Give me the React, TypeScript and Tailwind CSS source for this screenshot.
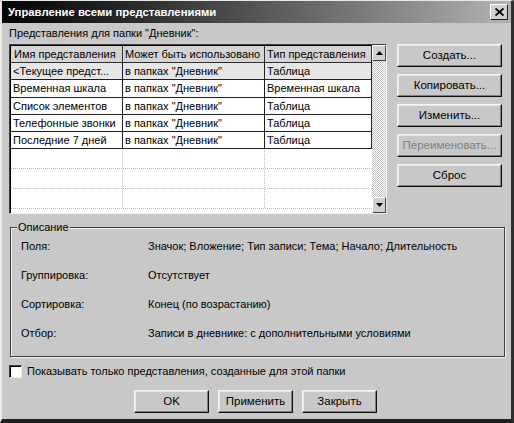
import React from "react";

const font = { fontFamily: '"Liberation Sans", Arial, sans-serif' };

function WinButton({ label, disabled, className = "" }: { label: string; disabled?: boolean; className?: string }) {
  return (
    <div
      className={`flex items-center justify-center border border-t-[#f4f4f4] border-l-[#f4f4f4] border-r-[#101010] border-b-[#101010] bg-[#c8c8c8] shadow-[inset_-1px_-1px_#808080,inset_1px_1px_#e8e8e8] text-[11.5px] ${
        disabled ? "text-[#808080]" : "text-black"
      } ${className}`}
    >
      {label}
    </div>
  );
}

const rows = [
  ["<Текущее предст...", 'в папках "Дневник"', "Таблица"],
  ["Временная шкала", 'в папках "Дневник"', "Временная шкала"],
  ["Список элементов", 'в папках "Дневник"', "Таблица"],
  ["Телефонные звонки", 'в папках "Дневник"', "Таблица"],
  ["Последние 7 дней", 'в папках "Дневник"', "Таблица"],
];

const desc = [
  ["Поля:", "Значок; Вложение; Тип записи; Тема; Начало; Длительность"],
  ["Группировка:", "Отсутствует"],
  ["Сортировка:", "Конец (по возрастанию)"],
  ["Отбор:", "Записи в дневнике: с дополнительными условиями"],
];

function Arrow({ up }: { up?: boolean }) {
  return (
    <svg width="7" height="4" viewBox="0 0 7 4">
      {up ? <polygon points="0,4 7,4 3.5,0" fill="#000" /> : <polygon points="0,0 7,0 3.5,4" fill="#000" />}
    </svg>
  );
}

export default function App() {
  return (
    <div
      style={font}
      className="w-[514px] h-[423px] bg-[#c8c8c8] flex flex-col border-l-[2px] border-l-[#e8e8e8] border-t-[1px] border-t-[#e8e8e8] border-r-[3px] border-r-[#303030] border-b-[4px] border-b-[#202020] overflow-hidden"
    >
      {/* Title bar */}
      <div className="h-[22px] flex items-center justify-between bg-gradient-to-r from-[#050505] via-[#555555] to-[#b4b4b4] pl-[6px] pr-[3px]">
        <span className="text-white font-bold text-[11.3px]">Управление всеми представлениями</span>
        <div className="w-[18px] h-[16px] bg-[#d0d0d0] border border-t-white border-l-white border-r-[#202020] border-b-[#202020] flex items-center justify-center">
          <svg width="9" height="8" viewBox="0 0 9 8">
            <path d="M0.5 0.5 L8.5 7.5 M8.5 0.5 L0.5 7.5" stroke="#000" strokeWidth="1.8" />
          </svg>
        </div>
      </div>

      <div className="flex flex-col px-[7px]">
        <div className="text-[11px] text-black h-[21px] flex items-end leading-none pb-[5px]">Представления для папки "Дневник":</div>

        <div className="flex">
          {/* List */}
          <div className="w-[378px] h-[170px] bg-white border border-t-[#404040] border-l-[#404040] border-r-[#f0f0f0] border-b-[#f0f0f0] shadow-[inset_1px_1px_#000] flex">
            <div className="flex-1 flex flex-col pl-[1px] pt-[1px] text-[11px] text-black">
              <div className="flex h-[17px] bg-[#d4d4d4] border-b border-[#303030]">
                <div className="w-[112px] px-[3px] flex items-center border-r border-[#303030] whitespace-nowrap overflow-hidden">Имя представления</div>
                <div className="w-[142px] px-[2px] flex items-center border-r border-[#303030] whitespace-nowrap overflow-hidden">Может быть использовано</div>
                <div className="w-[107px] px-[2px] flex items-center border-r border-[#303030] whitespace-nowrap overflow-hidden">Тип представления</div>
              </div>
              {rows.map((r, i) => (
                <div key={i} className={`flex h-[17.3px] border-b border-[#202020] ${i === 0 ? "bg-[#e6e6e6]" : ""}`}>
                  <div className="w-[112px] px-[2px] flex items-center border-r border-[#202020] whitespace-nowrap overflow-hidden">{r[0]}</div>
                  <div className="w-[142px] px-[2px] flex items-center border-r border-[#202020] whitespace-nowrap overflow-hidden">{r[1]}</div>
                  <div className="w-[107px] px-[2px] flex items-center border-r border-[#202020] whitespace-nowrap overflow-hidden">{r[2]}</div>
                </div>
              ))}
              {[0, 1, 2].map((i) => (
                <div key={i} className="flex h-[20px] border-b border-dotted border-[#b8b8b8]">
                  <div className="w-[112px] border-r border-dotted border-[#b8b8b8]" />
                  <div className="w-[142px] border-r border-dotted border-[#b8b8b8]" />
                  <div className="w-[107px]" />
                </div>
              ))}
            </div>
            {/* Scrollbar */}
            <div className="w-[16px] flex flex-col bg-[repeating-conic-gradient(#c0c0c0_0%_25%,#ffffff_0%_50%)] bg-[length:2px_2px]">
              <div className="h-[16px] bg-[#d0d0d0] border border-t-white border-l-white border-r-[#404040] border-b-[#404040] flex items-center justify-center">
                <Arrow up />
              </div>
              <div className="flex-1" />
              <div className="h-[16px] bg-[#d0d0d0] border border-t-white border-l-white border-r-[#404040] border-b-[#404040] flex items-center justify-center">
                <Arrow />
              </div>
            </div>
          </div>

          {/* Buttons */}
          <div className="ml-[10px] flex flex-col gap-[7px]">
            <WinButton label="Создать..." className="w-[105px] h-[23px]" />
            <WinButton label="Копировать..." className="w-[105px] h-[23px]" />
            <WinButton label="Изменить..." className="w-[105px] h-[23px]" />
            <WinButton label="Переименовать..." disabled className="w-[105px] h-[23px]" />
            <WinButton label="Сброс" className="w-[105px] h-[23px]" />
          </div>
        </div>

        {/* Group box */}
        <div className="relative mt-[13px] w-[495px] h-[130px] border border-[#404040] shadow-[1px_1px_#f0f0f0,inset_1px_1px_#f0f0f0] ml-[1px]">
          <div className="absolute -top-[8px] left-[6px] bg-[#c8c8c8] px-[1px] text-[11px] text-black leading-[14px]">Описание</div>
          <div className="flex flex-col pt-[4px] pl-[10px] text-[11px] text-black">
            {desc.map((d, i) => (
              <div key={i} className="flex h-[29px] items-center">
                <div className="w-[127px]">{d[0]}</div>
                <div>{d[1]}</div>
              </div>
            ))}
          </div>
        </div>

        {/* Checkbox */}
        <div className="flex items-center mt-[7px] h-[14px]">
          <div className="w-[13px] h-[13px] bg-white border border-t-[#404040] border-l-[#404040] border-r-[#f0f0f0] border-b-[#f0f0f0] shadow-[inset_1px_1px_#000]" />
          <span className="ml-[5px] text-[11px] text-black">Показывать только представления, созданные для этой папки</span>
        </div>

        {/* Bottom buttons */}
        <div className="flex justify-center gap-[9px] mt-[12px] pr-[2px]">
          <WinButton label="OK" className="w-[75px] h-[23px]" />
          <WinButton label="Применить" className="w-[75px] h-[23px]" />
          <WinButton label="Закрыть" className="w-[75px] h-[23px]" />
        </div>
      </div>
    </div>
  );
}
